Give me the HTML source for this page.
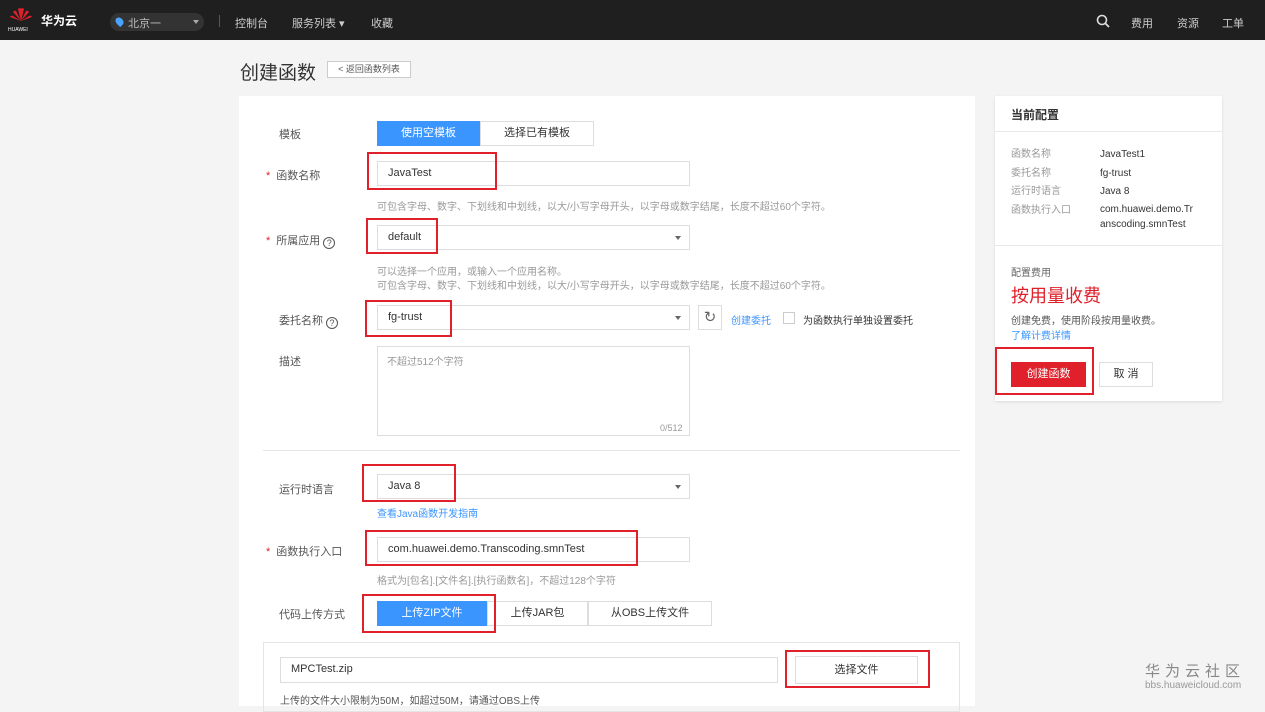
<!DOCTYPE html>
<html><head><meta charset="utf-8"><style>
*{margin:0;padding:0;box-sizing:border-box}
body{width:1265px;height:700px;overflow:hidden;background:#f4f4f4;font-family:"Liberation Sans","Noto Sans CJK SC",sans-serif;font-size:11px;color:#333;position:relative}
.a{position:absolute}
.top{left:0;top:0;width:1265px;height:40px;background:#1f1f1f;color:#ccc}
.inp{position:absolute;background:#fff;border:1px solid #ddd;height:25px;padding-left:10px;line-height:23px;color:#333;font-size:11px}
.rb{position:absolute;border:2px solid #e0202a}
.lab{position:absolute;color:#555;font-size:11px}
.hint{position:absolute;color:#999;font-size:10px}
.star{color:#e0202a;margin-right:6px}
.arr{position:absolute;right:8px;top:10px;width:0;height:0;border-left:3px solid transparent;border-right:3px solid transparent;border-top:4px solid #666}
.btn{position:absolute;height:25px;line-height:23px;text-align:center;border:1px solid #ddd;background:#fff;color:#333;font-size:11px}
.blue{background:#3a95ff;border-color:#3a95ff;color:#fff}
.q{display:inline-block;width:12px;height:12px;border:1px solid #555;border-radius:50%;font-size:9px;line-height:10px;text-align:center;vertical-align:-2px;margin-left:3px}
</style></head><body>
<div class="a top">
 <svg class="a" style="left:9px;top:7px" width="24" height="18" viewBox="0 0 24 18"><g fill="#e0202a"><path d="M12 14 L9 2 Q11 0 12 2Z"/><path d="M12 14 L15 2 Q13 0 12 2Z"/><path d="M12 14 L4 5 Q5 3 7 4Z"/><path d="M12 14 L20 5 Q19 3 17 4Z"/><path d="M12 14 L1 10 Q2 8 4 9Z"/><path d="M12 14 L23 10 Q22 8 20 9Z"/></g></svg>
 <div class="a" style="left:8px;top:27px;font-size:5px;color:#fff">HUAWEI</div>
 <div class="a" style="left:41px;top:12px;color:#fff;font-size:12px;font-weight:bold">华为云</div>
 <div class="a" style="left:110px;top:13px;width:94px;height:18px;background:#333;border-radius:9px"></div>
 <div class="a" style="left:116px;top:17px;width:7px;height:9px;background:#4aa3ff;border-radius:50% 50% 50% 0;transform:rotate(-45deg)"></div>
 <div class="a" style="left:128px;top:15px;color:#bbb">北京一</div>
 <div class="a" style="left:193px;top:20px;border-left:3px solid transparent;border-right:3px solid transparent;border-top:4px solid #aaa"></div>
 <div class="a" style="left:219px;top:15px;width:1px;height:12px;background:#555"></div>
 <div class="a" style="left:235px;top:15px">控制台</div>
 <div class="a" style="left:292px;top:15px">服务列表 ▾</div>
 <div class="a" style="left:371px;top:15px">收藏</div>
 <svg class="a" style="left:1096px;top:14px" width="14" height="14"><circle cx="6" cy="6" r="4.5" stroke="#ddd" stroke-width="1.6" fill="none"/><path d="M9.5 9.5L13 13" stroke="#ddd" stroke-width="1.8"/></svg>
 <div class="a" style="left:1131px;top:15px">费用</div>
 <div class="a" style="left:1177px;top:15px">资源</div>
 <div class="a" style="left:1222px;top:15px">工单</div>
</div>
<div class="a" style="left:240px;top:58px;font-size:19px;color:#333">创建函数</div>
<div class="a" style="left:327px;top:61px;width:84px;height:17px;border:1px solid #ccc;background:#fff;font-size:9px;line-height:15px;text-align:center;color:#555">&lt; 返回函数列表</div>

<div class="a" style="left:239px;top:96px;width:736px;height:610px;background:#fff"></div>
<div class="lab" style="left:279px;top:126px">模板</div>
<div class="btn blue" style="left:377px;top:121px;width:103px">使用空模板</div>
<div class="btn" style="left:480px;top:121px;width:114px">选择已有模板</div>

<div class="lab" style="left:266px;top:167px"><span class="star">*</span>函数名称</div>
<div class="inp" style="left:377px;top:161px;width:313px">JavaTest</div>
<div class="rb" style="left:367px;top:152px;width:130px;height:38px"></div>
<div class="hint" style="left:377px;top:198px">可包含字母、数字、下划线和中划线，以大/小写字母开头，以字母或数字结尾，长度不超过60个字符。</div>

<div class="lab" style="left:266px;top:232px"><span class="star">*</span>所属应用<span class="q">?</span></div>
<div class="inp" style="left:377px;top:225px;width:313px">default<i class="arr"></i></div>
<div class="rb" style="left:366px;top:218px;width:72px;height:36px"></div>
<div class="hint" style="left:377px;top:263px">可以选择一个应用，或输入一个应用名称。</div>
<div class="hint" style="left:377px;top:277px">可包含字母、数字、下划线和中划线，以大/小写字母开头，以字母或数字结尾，长度不超过60个字符。</div>

<div class="lab" style="left:279px;top:312px">委托名称<span class="q">?</span></div>
<div class="inp" style="left:377px;top:305px;width:313px">fg-trust<i class="arr"></i></div>
<div class="rb" style="left:365px;top:300px;width:87px;height:37px"></div>
<div class="btn" style="left:698px;top:305px;width:24px;font-size:15px;color:#666">↻</div>
<div class="a" style="left:731px;top:312px;color:#3a95ff;font-size:10px">创建委托</div>
<div class="a" style="left:783px;top:312px;width:12px;height:12px;border:1px solid #ccc"></div>
<div class="a" style="left:803px;top:312px;font-size:10px">为函数执行单独设置委托</div>

<div class="lab" style="left:279px;top:353px">描述</div>
<div class="a" style="left:377px;top:346px;width:313px;height:90px;border:1px solid #ddd"></div>
<div class="hint" style="left:387px;top:353px">不超过512个字符</div>
<div class="hint" style="left:660px;top:423px;font-size:9px">0/512</div>
<div class="a" style="left:263px;top:450px;width:697px;height:1px;background:#e5e5e5"></div>

<div class="lab" style="left:279px;top:481px">运行时语言</div>
<div class="inp" style="left:377px;top:474px;width:313px">Java 8<i class="arr"></i></div>
<div class="rb" style="left:362px;top:464px;width:94px;height:38px"></div>
<div class="a" style="left:377px;top:505px;color:#3a95ff;font-size:10px">查看Java函数开发指南</div>

<div class="lab" style="left:266px;top:543px"><span class="star">*</span>函数执行入口</div>
<div class="inp" style="left:377px;top:537px;width:313px">com.huawei.demo.Transcoding.smnTest</div>
<div class="rb" style="left:365px;top:530px;width:273px;height:36px"></div>
<div class="hint" style="left:377px;top:572px">格式为[包名].[文件名].[执行函数名]，不超过128个字符</div>

<div class="lab" style="left:279px;top:606px">代码上传方式</div>
<div class="btn blue" style="left:377px;top:601px;width:110px">上传ZIP文件</div>
<div class="btn" style="left:487px;top:601px;width:101px">上传JAR包</div>
<div class="btn" style="left:588px;top:601px;width:124px">从OBS上传文件</div>
<div class="rb" style="left:362px;top:594px;width:134px;height:39px"></div>

<div class="a" style="left:263px;top:642px;width:697px;height:70px;border:1px solid #e5e5e5"></div>
<div class="inp" style="left:280px;top:657px;width:498px;height:26px">MPCTest.zip</div>
<div class="btn" style="left:795px;top:656px;width:123px;height:28px;line-height:26px">选择文件</div>
<div class="rb" style="left:785px;top:650px;width:145px;height:38px"></div>
<div class="a" style="left:280px;top:692px;font-size:10px;color:#555">上传的文件大小限制为50M，如超过50M，请通过OBS上传</div>

<div class="a" style="left:995px;top:96px;width:227px;height:305px;background:#fff;box-shadow:0 1px 3px rgba(0,0,0,.1)"></div>
<div class="a" style="left:1011px;top:106px;font-size:12px;font-weight:bold;color:#333">当前配置</div>
<div class="a" style="left:995px;top:131px;width:227px;height:1px;background:#e8e8e8"></div>
<div class="a" style="left:1011px;top:146px;color:#999;font-size:10px;line-height:18.5px">函数名称<br>委托名称<br>运行时语言<br>函数执行入口</div>
<div class="a" style="left:1100px;top:146px;color:#333;font-size:10px;line-height:18.5px;width:110px">JavaTest1<br>fg-trust<br>Java 8<br><span style="line-height:15px;display:inline-block">com.huawei.demo.Tr<br>anscoding.smnTest</span></div>
<div class="a" style="left:995px;top:245px;width:227px;height:1px;background:#e8e8e8"></div>
<div class="a" style="left:1011px;top:264px;color:#666;font-size:10px">配置费用</div>
<div class="a" style="left:1011px;top:282px;color:#e0202a;font-size:18px">按用量收费</div>
<div class="a" style="left:1011px;top:312px;color:#555;font-size:10px">创建免费，使用阶段按用量收费。</div>
<div class="a" style="left:1011px;top:327px;color:#3a95ff;font-size:10px">了解计费详情</div>
<div class="btn" style="left:1011px;top:362px;width:75px;background:#e0202a;border-color:#e0202a;color:#fff">创建函数</div>
<div class="btn" style="left:1099px;top:362px;width:54px">取 消</div>
<div class="rb" style="left:995px;top:347px;width:99px;height:48px"></div>

<div class="a" style="left:1145px;top:660px;font-size:15px;color:#888;letter-spacing:5px">华为云社区</div>
<div class="a" style="left:1145px;top:680px;font-size:10px;color:#999">bbs.huaweicloud.com</div>
</body></html>
